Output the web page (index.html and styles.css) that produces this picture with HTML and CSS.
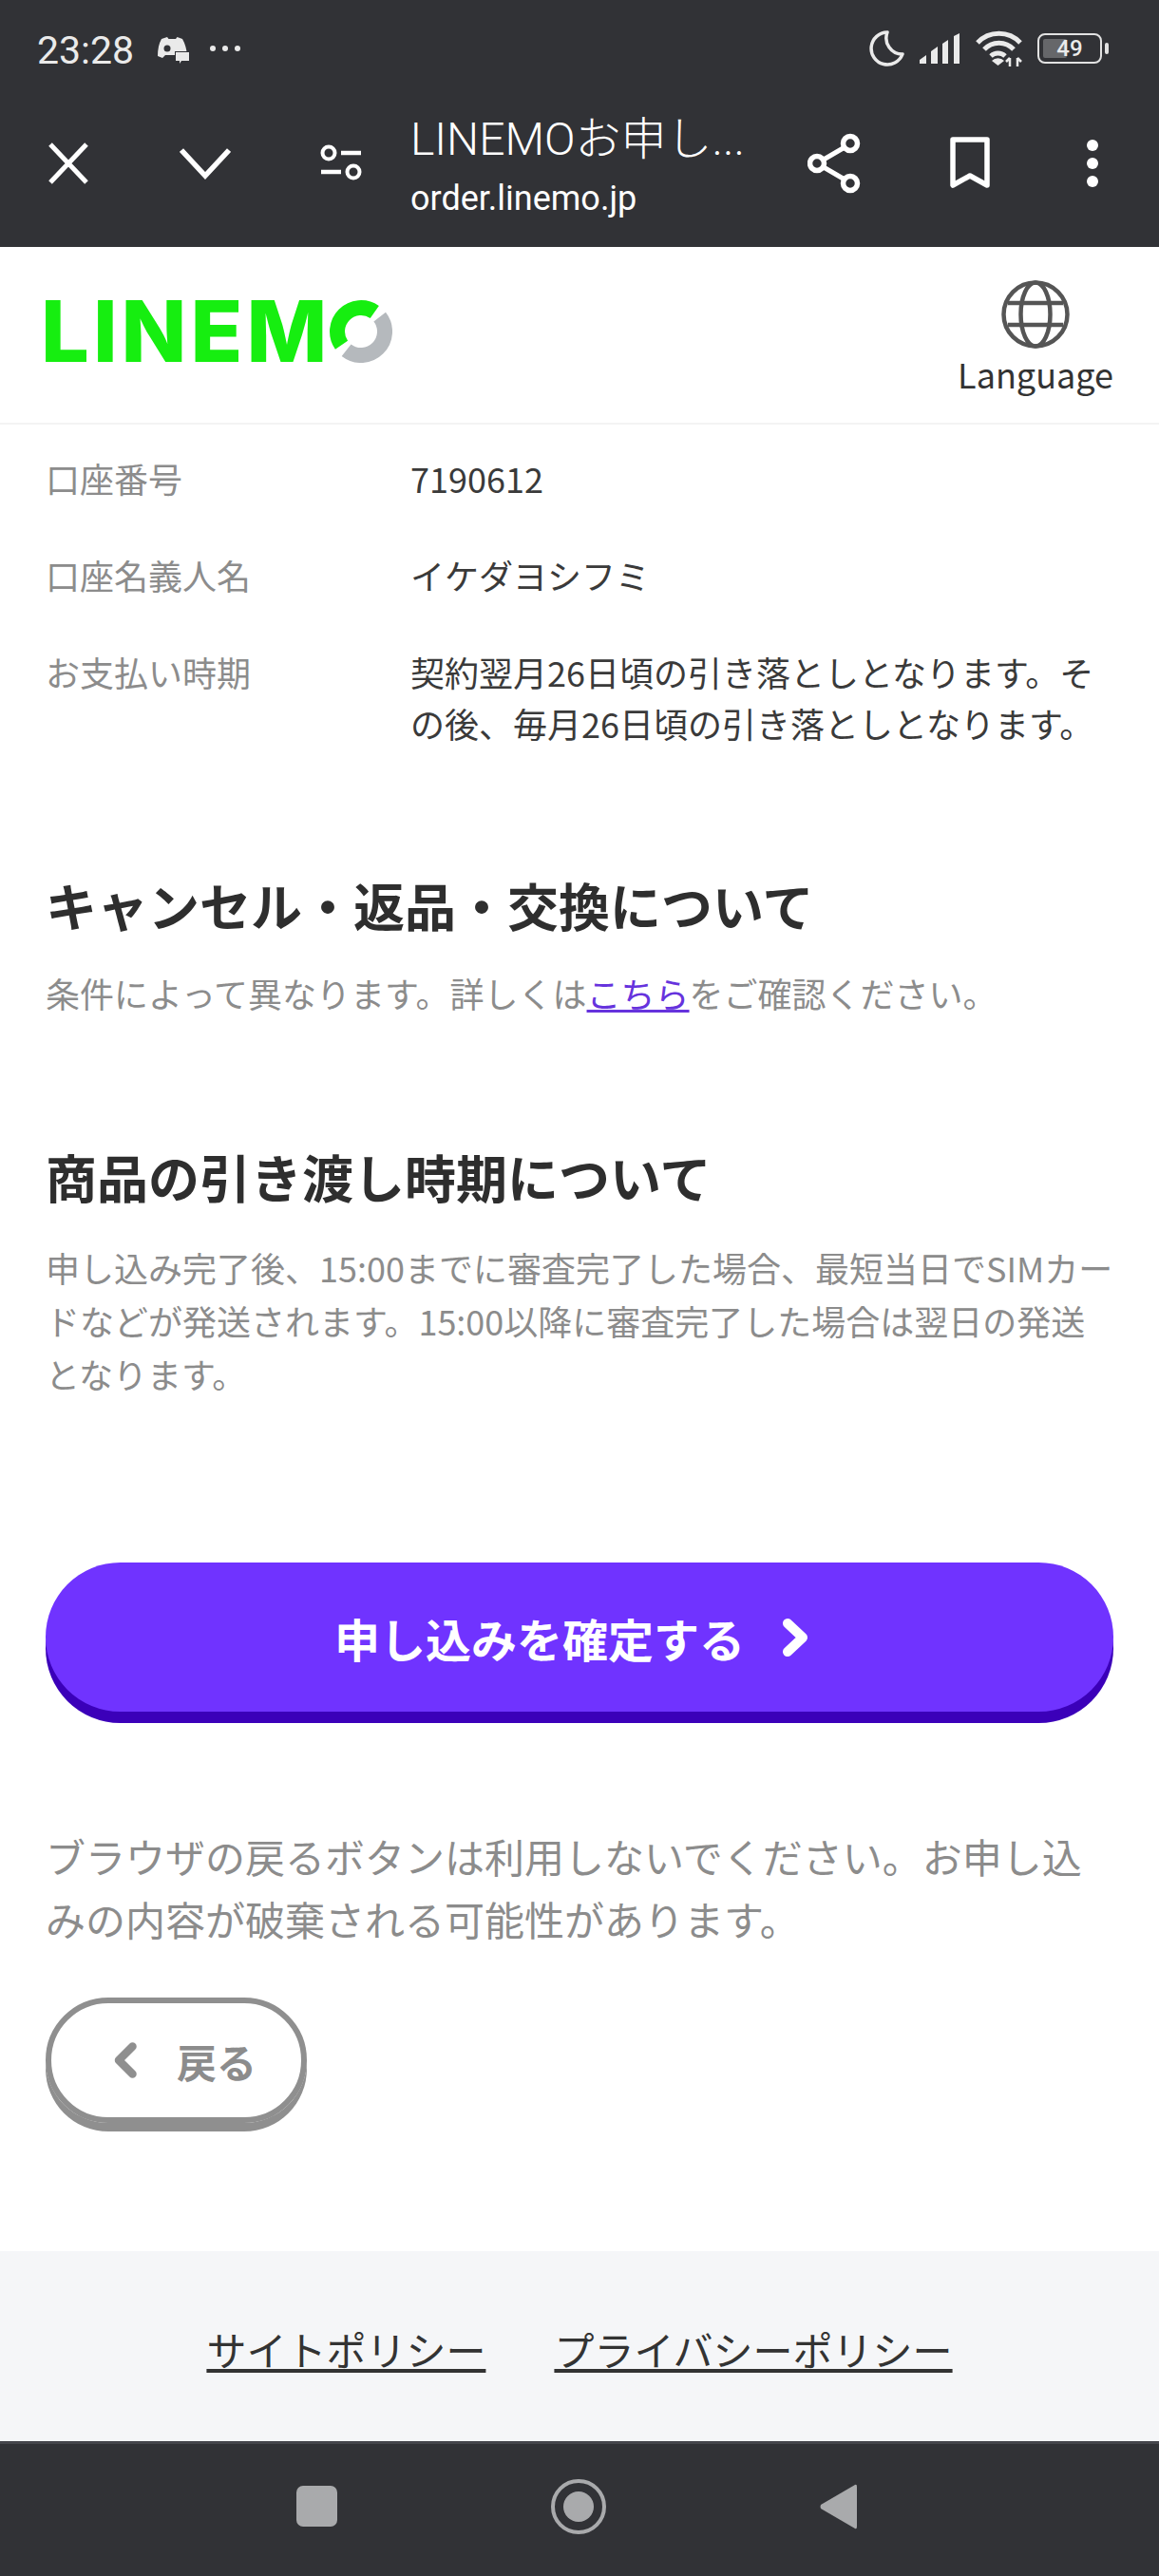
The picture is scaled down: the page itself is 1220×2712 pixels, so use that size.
FILE: index.html
```html
<!DOCTYPE html>
<html lang="ja">
<head>
  <meta charset="UTF-8">
  <title>LINEMO お申し込み</title>
  <link rel="stylesheet" href="styles.css">
</head>
<body>
  <div class="statusbar">
    <span class="time">23:28</span>
    <svg class="discord" width="35" height="30" viewBox="0 0 35 30">
      <path d="M5 3 L11 1 L12.5 3 H20 L21.5 1 L27 3 Q31 10 32 20 L27 23 L24 20 H9 L6 23 L1 21 Q1 10 5 3 Z" fill="#eaeaea"/>
      <circle cx="11" cy="13" r="3.5" fill="#313236"/>
      <path d="M20 17 H34 V26 H26 L24 29 V26 H20 Z" fill="#eaeaea" stroke="#313236" stroke-width="2" paint-order="stroke"/>
    </svg>
    <svg class="more" width="32" height="8" viewBox="0 0 32 8">
      <circle cx="3" cy="4" r="3" fill="#eaeaea"/>
      <circle cx="16" cy="4" r="3" fill="#eaeaea"/>
      <circle cx="29" cy="4" r="3" fill="#eaeaea"/>
    </svg>
    <div class="status-right">
      <svg width="37" height="38" viewBox="0 0 37 38">
        <path d="M19 2 A17 17 0 1 0 35 25 A17 17 0 0 1 19 2 Z" fill="none" stroke="#eaeaea" stroke-width="3.5" stroke-linejoin="round"/>
      </svg>
      <svg width="43" height="32" viewBox="0 0 43 32">
        <path d="M0 32 V28 L7 23 V32 Z M12 19 L19 14 V32 H12 Z M24 11 L30 7 V32 H24 Z M36 3 L42 0 V32 H36 Z" fill="#eaeaea"/>
      </svg>
      <svg width="49" height="38" viewBox="0 0 49 38">
        <path d="M2 13 A31 31 0 0 1 47 13 M9 20 A21 21 0 0 1 40 20 M16 27 A11 11 0 0 1 31 27" fill="none" stroke="#eaeaea" stroke-width="5"/>
        <path d="M23.5 37 L17 32 A9 9 0 0 1 30 32 Z" fill="#eaeaea"/>
        <path d="M36 38 V29 M44 38 V29 M32 33 L36 29 M44 29 L48 33" fill="none" stroke="#eaeaea" stroke-width="2.5"/>
      </svg>
      <div class="battery">
        <div class="battery-body">
          <span class="battery-level"></span>
          <span class="battery-num">49</span>
        </div>
        <span class="battery-tip"></span>
      </div>
    </div>
  </div>

  <div class="toolbar">
    <svg class="ic-close" width="42" height="44" viewBox="0 0 42 44">
      <path d="M2 2 L40 42 M40 2 L2 42" fill="none" stroke="#fff" stroke-width="5"/>
    </svg>
    <svg class="ic-down" width="54" height="34" viewBox="0 0 54 34">
      <path d="M2 3 L27 30 L52 3" fill="none" stroke="#fff" stroke-width="5.5"/>
    </svg>
    <svg class="ic-tune" width="44" height="40" viewBox="0 0 44 40">
      <circle cx="9" cy="9" r="6.5" fill="none" stroke="#fff" stroke-width="4"/>
      <path d="M22 9 H43 M1 29 H22" fill="none" stroke="#fff" stroke-width="4.5"/>
      <circle cx="35" cy="29" r="6.5" fill="none" stroke="#fff" stroke-width="4"/>
    </svg>
    <div class="title-block">
      <div class="page-title">LINEMOお申し...</div>
      <div class="page-url">order.linemo.jp</div>
    </div>
    <svg class="ic-share" width="56" height="64" viewBox="0 0 56 64">
      <path d="M46 11 L10 32 L46 53" fill="none" stroke="#fff" stroke-width="5"/>
      <circle cx="45" cy="11" r="7.5" fill="#313236" stroke="#fff" stroke-width="5.5"/>
      <circle cx="10" cy="32" r="7.5" fill="#313236" stroke="#fff" stroke-width="5.5"/>
      <circle cx="45" cy="53" r="7.5" fill="#313236" stroke="#fff" stroke-width="5.5"/>
    </svg>
    <svg class="ic-bookmark" width="42" height="56" viewBox="0 0 42 56">
      <path d="M3 3 H39 V51 L21 41 L3 51 Z" fill="none" stroke="#fff" stroke-width="5.5" stroke-linejoin="round"/>
    </svg>
    <svg class="ic-dots" width="14" height="52" viewBox="0 0 14 52">
      <circle cx="7" cy="7" r="6" fill="#fff"/>
      <circle cx="7" cy="26" r="6" fill="#fff"/>
      <circle cx="7" cy="45" r="6" fill="#fff"/>
    </svg>
  </div>

  <header class="site-header">
    <div class="logo">
      <span class="logo-text">LINEM</span>
      <svg width="66" height="66" viewBox="0 0 66 66">
        <path d="M47.3 12.5 A25 25 0 0 0 12.5 47.3" fill="none" stroke="#16ee10" stroke-width="16"/>
        <path d="M52.7 17.6 A25 25 0 0 1 17.6 52.7" fill="none" stroke="#b5b9bd" stroke-width="16"/>
      </svg>
    </div>
    <div class="lang">
      <svg width="72" height="72" viewBox="0 0 72 72">
        <g fill="none" stroke="#555" stroke-width="4.5">
          <circle cx="36" cy="36" r="33.5"/>
          <ellipse cx="36" cy="36" rx="15.5" ry="33.5"/>
          <path d="M7 24 H65 M7 47 H65"/>
        </g>
      </svg>
      <span>Language</span>
    </div>
  </header>

  <main class="content">
    <dl class="info">
      <div class="info-row">
        <dt>口座番号</dt>
        <dd>7190612</dd>
      </div>
      <div class="info-row">
        <dt>口座名義人名</dt>
        <dd>イケダヨシフミ</dd>
      </div>
      <div class="info-row">
        <dt>お支払い時期</dt>
        <dd>契約翌月26日頃の引き落としとなります。その後、毎月26日頃の引き落としとなります。</dd>
      </div>
    </dl>

    <h2 class="sec-title first">キャンセル・返品・交換について</h2>
    <p class="sec-text">条件によって異なります。詳しくは<a href="#">こちら</a>をご確認ください。</p>

    <h2 class="sec-title second">商品の引き渡し時期について</h2>
    <p class="sec-text long">申し込み完了後、15:00までに審査完了した場合、最短当日でSIMカードなどが発送されます。15:00以降に審査完了した場合は翌日の発送となります。</p>

    <a class="btn-primary" href="#">
      <span>申し込みを確定する</span>
      <svg width="32" height="40" viewBox="0 0 32 40">
        <path d="M9 5 L25 20 L9 35" fill="none" stroke="#fff" stroke-width="10" stroke-linejoin="round" stroke-linecap="round"/>
      </svg>
    </a>

    <p class="note">ブラウザの戻るボタンは利用しないでください。お申し込みの内容が破棄される可能性があります。</p>

    <a class="btn-back" href="#">
      <svg width="26" height="38" viewBox="0 0 26 38">
        <path d="M20.5 4.5 L6 19 L20.5 33.5" fill="none" stroke="#8f8f8f" stroke-width="8.5" stroke-linejoin="round" stroke-linecap="round"/>
      </svg>
      <span>戻る</span>
    </a>
  </main>

  <footer class="site-footer">
    <a href="#">サイトポリシー</a>
    <a href="#">プライバシーポリシー</a>
  </footer>

  <nav class="navbar">
    <svg width="43" height="43" viewBox="0 0 43 43">
      <rect width="43" height="43" rx="7" fill="#a9aaac"/>
    </svg>
    <svg width="58" height="58" viewBox="0 0 58 58">
      <circle cx="29" cy="29" r="27" fill="none" stroke="#a9aaac" stroke-width="4"/>
      <circle cx="29" cy="29" r="16" fill="#a9aaac"/>
    </svg>
    <svg width="39" height="50" viewBox="0 0 39 50">
      <path d="M37 2 Q39 1 39 4 V46 Q39 49 37 48 L1 27 Q0 25 1 23 Z" fill="#a9aaac"/>
    </svg>
  </nav>
</body>
</html>
```

FILE: styles.css
```css
html, body { margin: 0; padding: 0; }
body {
  width: 1220px;
  height: 2712px;
  display: flex;
  flex-direction: column;
  overflow: hidden;
  background: #fff;
  color: #333;
  font-family: "Noto Sans CJK JP", "Noto Sans", sans-serif;
}
a { color: inherit; }

/* phone status bar */
.statusbar {
  height: 90px;
  padding: 16px 53px 0 39px;
  box-sizing: border-box;
  display: flex;
  align-items: center;
  background: #313236;
  color: #eaeaea;
  font-family: Roboto, sans-serif;
}
.time { font-size: 41px; width: 126px; }
.more { margin-left: 21px; margin-top: -4px; }
.status-right { margin-left: auto; display: flex; align-items: center; gap: 16px; margin-top: -4px; }
.battery { display: flex; align-items: center; gap: 3px; }
.battery-body {
  position: relative;
  width: 68px;
  height: 32px;
  box-sizing: border-box;
  border: 2.5px solid #e2e2e2;
  border-radius: 8px;
  display: flex;
  align-items: center;
  justify-content: center;
  font-size: 24px;
  font-weight: 500;
}
.battery-level { position: absolute; left: 4px; top: 4px; bottom: 4px; width: 25px; background: #66676a; border-radius: 2px; }
.battery-num { position: relative; }
.battery-tip { width: 4px; height: 12px; background: #e2e2e2; border-radius: 2px; }

/* browser toolbar */
.toolbar {
  height: 170px;
  padding: 0 0 6px 51px;
  box-sizing: border-box;
  display: flex;
  align-items: center;
  background: #313236;
  color: #fff;
}
.ic-down { margin-left: 96px; }
.ic-tune { margin-left: 94px; }
.title-block { width: 418px; margin: 6px 0 0 51px; font-family: Roboto, "Noto Sans CJK JP", sans-serif; font-weight: 300; }
.page-title { font-size: 48px; line-height: 60px; }
.page-url { font-size: 36px; line-height: 48px; margin-top: 8px; font-weight: 400; }
.ic-bookmark { margin-left: 94px; }
.ic-dots { margin-left: 101px; }

/* site header */
.site-header {
  height: 187px;
  padding: 0 48px;
  box-sizing: border-box;
  display: flex;
  align-items: center;
  justify-content: space-between;
  border-bottom: 2px solid #f3f3f3;
}
.logo { display: flex; align-items: center; margin-top: -7px; }
.logo-text {
  font-family: Inter, sans-serif;
  font-size: 90px;
  font-weight: 800;
  letter-spacing: 4px;
  line-height: 66px;
  color: #16ee10;
  width: 299px;
  margin-left: -5px;
  padding-right: 5px;
}
.lang { display: flex; flex-direction: column; align-items: center; color: #333; font-size: 36px; line-height: 50px; padding-top: 8px; gap: 1px; }

/* main content */
.content { flex: 1; padding: 29px 48px 0; overflow: hidden; }
.info { margin: 0; }
.info-row { display: grid; grid-template-columns: 384px 740px; font-size: 36px; line-height: 54px; margin-bottom: 48px; }
.info-row dt { color: #8c8c8c; }
.info-row dd { margin: 0; color: #3a3a3a; }
.sec-title { margin: 0; font-size: 54px; font-weight: 700; line-height: 76px; color: #2e2e2e; }
.sec-title.first { margin-top: 127px; }
.sec-title.second { margin-top: 128px; }
.sec-text { margin: 26px 0 0; font-size: 36px; line-height: 56px; color: #8c8c8c; }
.sec-text.long { margin-top: 29px; }
.sec-text a { color: #6633dd; }

.btn-primary {
  margin-top: 171px;
  height: 157px;
  padding-right: 16px;
  border-radius: 80px;
  background: #7033ff;
  box-shadow: 0 12px 0 #3b00b9;
  color: #fff;
  font-size: 48px;
  font-weight: 700;
  text-decoration: none;
  display: flex;
  align-items: center;
  justify-content: center;
  gap: 36px;
}
.note { margin: 119px 0 0; font-size: 42px; line-height: 66px; color: #8c8c8c; }
.btn-back {
  margin-top: 50px;
  width: 275px;
  height: 132px;
  padding-left: 65px;
  box-sizing: border-box;
  border: 6px solid #8f8f8f;
  border-radius: 66px;
  box-shadow: 0 9px 0 #8f8f8f;
  color: #8c8c8c;
  font-size: 42px;
  font-weight: 700;
  text-decoration: none;
  display: flex;
  align-items: center;
  gap: 41px;
}

/* footer + android nav */
.site-footer {
  height: 200px;
  padding-top: 5px;
  box-sizing: border-box;
  display: flex;
  align-items: center;
  justify-content: center;
  gap: 72px;
  background: #f5f6f8;
  font-size: 42px;
  color: #333;
}
.navbar {
  height: 142px;
  box-sizing: border-box;
  border-top: 3px solid #45464b;
  background: #313236;
  display: flex;
  align-items: center;
  justify-content: center;
  gap: 225px;
  padding: 0 6px 8px 0;
}
```
